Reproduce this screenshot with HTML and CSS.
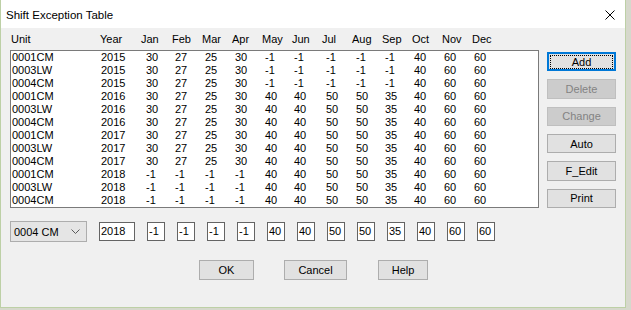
FILE: index.html
```html
<html>

<head>
    <meta charset="UTF-8">
    <meta name="viewport" content="width=device-width, initial-scale=1.0">
    <title>Shift Exception Table</title>
    <link rel="stylesheet" href="styles.css">
</head>

<body>
    <div class="window">
        <div class="titlebar">
            <span class="title">Shift Exception Table</span>
            <svg class="close" width="10" height="10" viewBox="0 0 10 10">
                <path d="M0.5 0.5 L9.5 9.5 M9.5 0.5 L0.5 9.5" stroke="#000" stroke-width="1" fill="none" />
            </svg>
        </div>

        <div class="main">
            <div class="table-col">
                <div class="head">
                    <span>Unit</span><span>Year</span><span>Jan</span><span>Feb</span><span>Mar</span><span>Apr</span><span>May</span><span>Jun</span><span>Jul</span><span>Aug</span><span>Sep</span><span>Oct</span><span>Nov</span><span>Dec</span>
                </div>
                <div class="list">
                    <div class="row"><span>0001CM</span><span>2015</span><span>30</span><span>27</span><span>25</span><span>30</span><span>-1</span><span>-1</span><span>-1</span><span>-1</span><span>-1</span><span>40</span><span>60</span><span>60</span></div>
                    <div class="row"><span>0003LW</span><span>2015</span><span>30</span><span>27</span><span>25</span><span>30</span><span>-1</span><span>-1</span><span>-1</span><span>-1</span><span>-1</span><span>40</span><span>60</span><span>60</span></div>
                    <div class="row"><span>0004CM</span><span>2015</span><span>30</span><span>27</span><span>25</span><span>30</span><span>-1</span><span>-1</span><span>-1</span><span>-1</span><span>-1</span><span>40</span><span>60</span><span>60</span></div>
                    <div class="row"><span>0001CM</span><span>2016</span><span>30</span><span>27</span><span>25</span><span>30</span><span>40</span><span>40</span><span>50</span><span>50</span><span>35</span><span>40</span><span>60</span><span>60</span></div>
                    <div class="row"><span>0003LW</span><span>2016</span><span>30</span><span>27</span><span>25</span><span>30</span><span>40</span><span>40</span><span>50</span><span>50</span><span>35</span><span>40</span><span>60</span><span>60</span></div>
                    <div class="row"><span>0004CM</span><span>2016</span><span>30</span><span>27</span><span>25</span><span>30</span><span>40</span><span>40</span><span>50</span><span>50</span><span>35</span><span>40</span><span>60</span><span>60</span></div>
                    <div class="row"><span>0001CM</span><span>2017</span><span>30</span><span>27</span><span>25</span><span>30</span><span>40</span><span>40</span><span>50</span><span>50</span><span>35</span><span>40</span><span>60</span><span>60</span></div>
                    <div class="row"><span>0003LW</span><span>2017</span><span>30</span><span>27</span><span>25</span><span>30</span><span>40</span><span>40</span><span>50</span><span>50</span><span>35</span><span>40</span><span>60</span><span>60</span></div>
                    <div class="row"><span>0004CM</span><span>2017</span><span>30</span><span>27</span><span>25</span><span>30</span><span>40</span><span>40</span><span>50</span><span>50</span><span>35</span><span>40</span><span>60</span><span>60</span></div>
                    <div class="row"><span>0001CM</span><span>2018</span><span>-1</span><span>-1</span><span>-1</span><span>-1</span><span>40</span><span>40</span><span>50</span><span>50</span><span>35</span><span>40</span><span>60</span><span>60</span></div>
                    <div class="row"><span>0003LW</span><span>2018</span><span>-1</span><span>-1</span><span>-1</span><span>-1</span><span>40</span><span>40</span><span>50</span><span>50</span><span>35</span><span>40</span><span>60</span><span>60</span></div>
                    <div class="row"><span>0004CM</span><span>2018</span><span>-1</span><span>-1</span><span>-1</span><span>-1</span><span>40</span><span>40</span><span>50</span><span>50</span><span>35</span><span>40</span><span>60</span><span>60</span></div>
                </div>
            </div>

            <div class="side-buttons">
                <div class="btn default"><span>Add</span></div>
                <div class="btn disabled">Delete</div>
                <div class="btn disabled">Change</div>
                <div class="btn">Auto</div>
                <div class="btn">F_Edit</div>
                <div class="btn">Print</div>
            </div>
        </div>

        <div class="edit-row">
            <div class="combo">
                <span>0004 CM</span>
                <svg width="9" height="5" viewBox="0 0 9 5">
                    <path d="M0.5 0.5 L4.5 4.5 L8.5 0.5" stroke="#5a5a5a" stroke-width="1" fill="none" />
                </svg>
            </div>
            <div class="edit year">2018</div>
            <div class="edit">-1</div>
            <div class="edit">-1</div>
            <div class="edit">-1</div>
            <div class="edit">-1</div>
            <div class="edit">40</div>
            <div class="edit">40</div>
            <div class="edit">50</div>
            <div class="edit">50</div>
            <div class="edit">35</div>
            <div class="edit">40</div>
            <div class="edit">60</div>
            <div class="edit">60</div>
        </div>

        <div class="bottom-buttons">
            <div class="btn ok">OK</div>
            <div class="btn cancel">Cancel</div>
            <div class="btn help">Help</div>
        </div>
    </div>
</body>

</html>
```

FILE: styles.css
```css
body {
    margin: 0;
    background-color: #d6d8cc;
    font-family: "Liberation Sans", Arial, sans-serif;
    font-size: 11px;
    color: #000000;
}

.window {
    width: 626px;
    height: 308px;
    box-sizing: border-box;
    background-color: #f0f0f0;
    border: 1px solid #bdd0a6;
    border-top: none;
}

.titlebar {
    height: 28px;
    background-color: #ffffff;
    display: flex;
    align-items: center;
    justify-content: space-between;
    padding: 0 10px 0 5px;
}

.title {
    font-size: 11.5px;
    margin-top: 1px;
}

.close {
    display: block;
    margin-top: 2px;
}

.main {
    display: flex;
    gap: 8px;
    height: 180px;
    padding-left: 9px;
}

.table-col {
    width: 529px;
}

.head,
.row {
    display: grid;
    height: 13px;
    line-height: 13px;
    white-space: nowrap;
}

.head {
    grid-template-columns: 89px 41px 31px repeat(10, 30px) 30px;
    margin: 5px 0 4px 1px;
}

.row {
    grid-template-columns: 89px 45px 29px 30px 30px 30px 29px 32px 30px 29px 29px 30px 30px 30px;
}

.list {
    height: 158px;
    box-sizing: border-box;
    background-color: #ffffff;
    border: 1px solid #7a7a7a;
    padding-left: 1px;
}

.side-buttons {
    display: flex;
    flex-direction: column;
    gap: 8px;
    padding-top: 24px;
}

.btn {
    width: 69px;
    height: 20px;
    box-sizing: border-box;
    display: flex;
    align-items: center;
    justify-content: center;
    background-color: #e1e1e1;
    border: 1px solid #adadad;
}

.btn.default {
    border-color: #0078d7;
    box-shadow: inset 0 0 0 1px #0078d7;
}

.btn.default span {
    width: 61px;
    height: 12px;
    line-height: 12px;
    text-align: center;
    outline: 1px dotted #000000;
}

.btn.disabled {
    background-color: #cccccc;
    border-color: #bfbfbf;
    color: #838383;
}

.edit-row {
    display: flex;
    align-items: center;
    gap: 12px;
    height: 21px;
    margin-top: 13px;
    padding-left: 9px;
}

.combo {
    width: 77px;
    height: 21px;
    box-sizing: border-box;
    display: flex;
    align-items: center;
    justify-content: space-between;
    padding: 0 6px 0 3px;
    background-color: #e5e5e5;
    border: 1px solid #adadad;
}

.combo svg {
    display: block;
}

.edit {
    width: 18px;
    height: 19px;
    box-sizing: border-box;
    line-height: 17px;
    padding-left: 1px;
    background-color: #ffffff;
    border: 1px solid #646464;
}

.edit.year {
    width: 36px;
}

.bottom-buttons {
    display: flex;
    margin-top: 18px;
    padding-left: 198px;
}

.btn.ok {
    width: 55px;
}

.btn.cancel {
    width: 63px;
    margin-left: 30px;
}

.btn.help {
    width: 50px;
    margin-left: 31px;
}
```
